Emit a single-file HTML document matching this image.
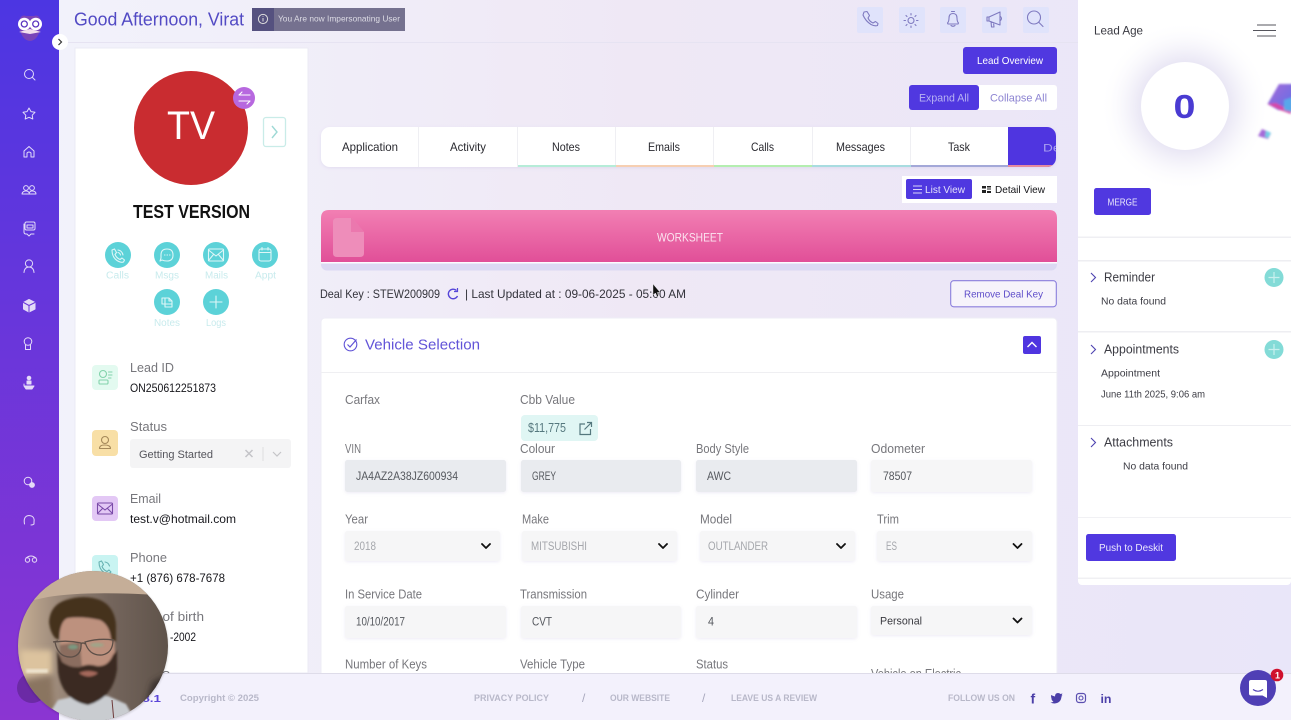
<!DOCTYPE html>
<html lang="en"><head><meta charset="utf-8"><title>Lead</title>
<style>
html,body{margin:0;padding:0;width:1291px;height:720px;overflow:hidden;background:#efeaf8}
svg{display:block;filter:blur(.35px)}
text{font-family:"Liberation Sans",sans-serif}
.lab{font-size:12.5px;fill:#77777c}
.val{font-size:12px;fill:#17171c}
.inp{font-size:11.5px;fill:#55585e}
.sel{font-size:11.5px;fill:#a5a7ac}
.tab{font-size:12px;fill:#2a2a30}
.foot{font-size:9.5px;fill:#b8b8c9;font-weight:bold}
.rt{font-size:12.5px;fill:#3c3c44}
.rs{font-size:10.5px;fill:#3c3c44}
.ac{font-size:10px;fill:#c8ebed}
.si{fill:none;stroke:#fff;stroke-width:1;stroke-linecap:round;stroke-linejoin:round;opacity:.82}
.hi{fill:none;stroke:#7f7ac0;stroke-width:1.1;stroke-linecap:round;stroke-linejoin:round}
.ai{fill:none;stroke:#fff;stroke-width:1.1;stroke-linecap:round;stroke-linejoin:round;opacity:.8}
.in{fill:none;stroke-width:1.1;stroke-linecap:round;stroke-linejoin:round}
.chev{fill:none;stroke:#111;stroke-width:1.8;stroke-linecap:round;stroke-linejoin:round}
</style></head><body>
<svg width="1291" height="720" viewBox="0 0 1291 720" xmlns="http://www.w3.org/2000/svg">
<defs>
<linearGradient id="side" x1="0" y1="0" x2="0" y2="1"><stop offset="0" stop-color="#4c36e2"/><stop offset="1" stop-color="#8b35d2"/></linearGradient>
<linearGradient id="bg" x1="0" y1="0" x2="1" y2="0"><stop offset="0" stop-color="#f2f3fc"/><stop offset=".5" stop-color="#efe8f5"/><stop offset="1" stop-color="#e9e6f9"/></linearGradient>
<linearGradient id="ws" x1="0" y1="0" x2="0" y2="1"><stop offset="0" stop-color="#f27fb3"/><stop offset="1" stop-color="#e14f98"/></linearGradient>
<linearGradient id="cube" x1="0" y1="0" x2="1" y2="1"><stop offset="0" stop-color="#a86ad8"/><stop offset="1" stop-color="#5b6fe8"/></linearGradient>
<linearGradient id="wall" x1="0" y1="0" x2="1" y2="0"><stop offset="0" stop-color="#c9b195"/><stop offset=".25" stop-color="#a08d7d"/><stop offset=".6" stop-color="#75665d"/><stop offset="1" stop-color="#5e5249"/></linearGradient>
<radialGradient id="halo"><stop offset=".5" stop-color="#8d7fc8" stop-opacity=".2"/><stop offset=".75" stop-color="#a99fd8" stop-opacity=".07"/><stop offset="1" stop-color="#fff" stop-opacity="0"/></radialGradient>
<filter id="b1" x="-20%" y="-20%" width="140%" height="140%"><feGaussianBlur stdDeviation="1"/></filter>
<filter id="b2" x="-30%" y="-30%" width="160%" height="160%"><feGaussianBlur stdDeviation="3"/></filter>
<filter id="soft" x="-5%" y="-20%" width="110%" height="140%"><feDropShadow dx="0" dy="1" stdDeviation="1.500" flood-color="#8a80c0" flood-opacity=".15"/></filter>
<clipPath id="face"><circle cx="93" cy="646" r="75"/></clipPath>
<clipPath id="tabs"><rect x="321" y="127" width="735" height="40" rx="9"/></clipPath>
<clipPath id="leftc"><rect x="75" y="48" width="233" height="625"/></clipPath>
<clipPath id="rc"><rect x="1078" y="0" width="213" height="586"/></clipPath>
</defs>

<!-- page background -->
<rect width="1291" height="720" fill="url(#bg)"/>
<rect x="59" y="42" width="1019" height="1" fill="#e6e3f2"/>

<!-- sidebar -->
<rect width="59" height="720" fill="url(#side)"/>
<g>
<path d="M19 21 Q21 14 26 16 L34 16 Q39 14 41 21 L41 28 Q37 41 30 41 Q23 41 19 28Z" fill="#8d4aa8" opacity=".7"/>
<circle cx="24.300" cy="24" r="6.300" fill="#fff"/><circle cx="35.700" cy="24" r="6.300" fill="#fff"/>
<circle cx="24.300" cy="24" r="3" fill="none" stroke="#5b36c0" stroke-width="1.300"/><circle cx="35.700" cy="24" r="3" fill="none" stroke="#5b36c0" stroke-width="1.300"/>
<path d="M19 32 L30 29 L41 32 L30 34Z" fill="#f4dfee"/>
</g>
<g class="si">
<circle cx="29" cy="74" r="4.500"/><path d="M32.500 77.500 L35 80"/>
<path d="M29 108 L31 111.600 L35 112.300 L32.200 115.200 L32.800 119 L29 117.300 L25.200 119 L25.800 115.200 L23 112.300 L27 111.600Z"/>
<path d="M24 151 L29 146.500 L34 151 L34 157 L31 157 L31 153 Q29 151 27 153 L27 157 L24 157Z"/>
<circle cx="26" cy="188" r="2.400"/><circle cx="32" cy="188" r="2.400"/><path d="M22 194 Q22.500 191 26 191 Q29 191 29.500 194Z M29 194 Q29.500 191 32 191 Q36 191 36 194Z"/>
<rect x="25" y="222" width="10" height="8" rx="1.500"/><path d="M24 224 L24 232 Q24 234 26 234 L27 234 L29 236 L31 234 L34 234"/><rect x="27" y="225" width="6" height="3"/>
<circle cx="29" cy="263.500" r="3.600"/><path d="M24 272.500 Q24.500 267 29 267 Q33.500 267 34 272.500"/>
<path d="M29 299.500 L35 302.500 L35 309 L29 312 L23.500 309 L23.500 302.500Z" fill="#fff"/><path d="M23.500 302.500 L29 305.500 L35 302.500 M29 305.500 L29 312" stroke="#6b35d8"/>
<circle cx="28" cy="341.500" r="3.800"/><path d="M25.500 345 L25.500 349.500 L30.500 349.500 L30.500 345"/>
<circle cx="29" cy="378" r="1.800" fill="#fff"/><path d="M27 384 L31 384 L31 381 L27 381Z" fill="#fff"/><path d="M24 386 L34 386 L32 389 L26 389Z M24 386 L24 384" fill="#fff"/>
<circle cx="28" cy="481" r="3.800"/><circle cx="32" cy="485" r="2.400" fill="#fff"/>
<path d="M24.500 524 Q23 516 29 515.500 Q35 516 34 522 M34 522 L34 524 Q33 525 31 525"/>
<circle cx="27.500" cy="560" r="2.200"/><circle cx="34.500" cy="560" r="2.200"/><path d="M26 558 Q31 554 36 558"/>
</g>
<circle cx="60" cy="42" r="8" fill="#fff"/>
<path d="M58.500 39 L61.500 42 L58.500 45" fill="none" stroke="#333" stroke-width="1.200"/>
<circle cx="32" cy="688" r="15" fill="#6b2aa5"/>

<!-- header -->
<text x="74" y="25.500" font-size="18.500" fill="#524ac4" textLength="170" lengthAdjust="spacingAndGlyphs">Good Afternoon, Virat</text>
<rect x="252" y="8" width="153" height="23" fill="#75718f"/>
<rect x="252" y="8" width="22" height="23" fill="#55517f"/>
<circle cx="263" cy="19" r="4.600" fill="none" stroke="#ddd" stroke-width="1"/><path d="M263 18 L263 21.500 M263 16.300 L263 16.900" stroke="#ddd" stroke-width="1"/>
<text x="278" y="21.600" font-size="8.500" fill="#dcdbe4" textLength="122" lengthAdjust="spacingAndGlyphs">You Are now Impersonating User</text>
<g fill="#e0e3fb">
<rect x="857" y="7" width="26" height="26" rx="2"/><rect x="899" y="7" width="26" height="26" rx="2"/><rect x="940" y="7" width="26" height="26" rx="2"/><rect x="982" y="7" width="25" height="26" rx="2"/><rect x="1023" y="7" width="26" height="26" rx="2"/>
</g>
<g class="hi">
<path d="M864 12 L867 11.500 L869.500 15.500 L868 18 Q869.500 21.500 873 23 L875.500 21.500 L878 23.500 L877.500 25.500 Q875 26.500 871 24.500 Q865.500 21 863 15 Z"/>
<circle cx="911" cy="20.500" r="3"/><path d="M911 13.500 V15 M911 26 V27.500 M904 20.500 H905.500 M916.500 20.500 H918 M906 15.500 L907 16.500 M915 24.500 L916 25.500 M906 25.500 L907 24.500 M915 16.500 L916 15.500"/>
<path d="M948 24 L947.500 23 Q949 21.500 949 18 Q949 13.500 953 13.500 Q957 13.500 957 18 Q957 21.500 958.500 23 L958 24 Z M951.500 11.500 L954.500 11.500 M951 25.500 Q953 27 955 25.500"/>
<path d="M989 17 L1000 12 L1000 25 L989 21 Z M989 17 L987 17 Q987 19 987 21 L989 21 M991 21.500 L991.500 27 L994 27 L993.500 22.500 M1000 16 Q1003 18.500 1000 21"/>
<circle cx="1034" cy="17.500" r="6.500"/><path d="M1039 22.500 L1043 26.500"/>
</g>

<!-- left card -->
<rect x="75" y="48" width="233" height="625" fill="#fff" stroke="#ebebf4" stroke-width="1"/>
<circle cx="191" cy="128" r="57" fill="#c92c30"/>
<text x="167" y="139" font-size="40" fill="#fff" textLength="48" lengthAdjust="spacingAndGlyphs">TV</text>
<circle cx="244" cy="98" r="11" fill="#b768df"/>
<path d="M250 95 H239 L242 92 M239 101 H250 L247 104" fill="none" stroke="#fff" stroke-width="1.100" stroke-linecap="round" stroke-linejoin="round"/>
<rect x="263.500" y="117.500" width="22" height="29" rx="2.500" fill="#fff" stroke="#c9ece8" stroke-width="1.300"/>
<path d="M272 126 L277 132 L272 138" fill="none" stroke="#9ed9d5" stroke-width="1.400"/>
<text x="133" y="218" font-size="18" font-weight="bold" fill="#111" textLength="117" lengthAdjust="spacingAndGlyphs">TEST VERSION</text>
<g fill="#5cd2d8">
<circle cx="118" cy="255" r="13"/><circle cx="167" cy="255" r="13"/><circle cx="216" cy="255" r="13"/><circle cx="265" cy="255" r="13"/><circle cx="167" cy="302" r="13"/><circle cx="216" cy="302" r="13"/>
</g>
<g class="ai">
<path d="M112 250 L114.500 249 L116.500 252.500 L115 254.500 Q116.500 258 120 259.500 L122 258 L124.500 260 L123.500 262 Q121 263 117 260.500 Q112 257 112 250 Z M118 250 Q122 250.500 123 255 M118 252.500 Q120 253 120.500 255"/>
<path d="M161 255 Q161 249 167 249 Q173 249 173 255 Q173 261 167 261 Q164 261 162 260 L160 261 L161 258 Q161 256.500 161 255Z"/><path d="M164.500 255 H165 M167 255 H167.500 M169.500 255 H170"/>
<rect x="208.500" y="249" width="15" height="12" rx="1"/><path d="M208.500 250 L216 256 L223.500 250 M208.500 260.500 L213.500 254.500 M223.500 260.500 L218.500 254.500"/>
<rect x="259" y="249" width="12" height="12" rx="2"/><path d="M259 252.500 H271 M262 247.500 V250 M268 247.500 V250"/>
<path d="M162 298 H169 L172 301 V307 H165 V304 H162 Z M165 298 V304 H172 M169 298 V301 H172"/><path d="M216 296 V308 M210 302 H222"/>
</g>
<text x="106" y="278.500" class="ac" textLength="23" lengthAdjust="spacingAndGlyphs">Calls</text>
<text x="155" y="278.500" class="ac" textLength="24" lengthAdjust="spacingAndGlyphs">Msgs</text>
<text x="205" y="278.500" class="ac" textLength="23" lengthAdjust="spacingAndGlyphs">Mails</text>
<text x="255" y="278.500" class="ac" textLength="21" lengthAdjust="spacingAndGlyphs">Appt</text>
<text x="154" y="326" class="ac" textLength="26" lengthAdjust="spacingAndGlyphs">Notes</text>
<text x="206" y="326" class="ac" textLength="20" lengthAdjust="spacingAndGlyphs">Logs</text>

<g clip-path="url(#leftc)">
<rect x="92" y="365" width="26" height="25" rx="4" fill="#e3faf0"/>
<g class="in" stroke="#83d3ab"><circle cx="103" cy="374" r="3.500"/><rect x="99" y="380" width="9" height="4" rx="1"/><path d="M108.500 372 H112 M108.500 375 H112 M108.500 378 H111"/></g>
<text x="130" y="372" class="lab" textLength="44" lengthAdjust="spacingAndGlyphs">Lead ID</text>
<text x="130" y="392" class="val" textLength="86" lengthAdjust="spacingAndGlyphs">ON250612251873</text>

<rect x="92" y="430" width="26" height="26" rx="4" fill="#f8dfa6"/>
<g class="in" stroke="#a5895a"><circle cx="105" cy="440" r="3.500"/><path d="M99.500 448.500 Q99.500 445 104.500 445 Q110.500 445 110.500 448.500 Z"/></g>
<text x="130" y="431" class="lab" textLength="37" lengthAdjust="spacingAndGlyphs">Status</text>
<rect x="130" y="439" width="161" height="29" rx="3" fill="#f4f4f5"/>
<text x="139" y="458" font-size="11" fill="#55555c" textLength="74" lengthAdjust="spacingAndGlyphs">Getting Started</text>
<path d="M245.500 450 L252.500 457 M252.500 450 L245.500 457" stroke="#c4c4c8" stroke-width="1.500"/>
<path d="M263 447 V461" stroke="#dedee0" stroke-width="1"/>
<path d="M273 452 L277 456 L281 452" fill="none" stroke="#c4c4c8" stroke-width="1.200"/>

<rect x="92" y="496" width="26" height="25" rx="4" fill="#e3c8f5"/>
<g class="in" stroke="#7a4aa8" stroke-width="1.300"><rect x="97.500" y="503" width="15" height="11" rx="1"/><path d="M97.500 504 L105 510 L112.500 504 M97.500 513.500 L102.500 508.500 M112.500 513.500 L107.500 508.500"/></g>
<text x="130" y="503" class="lab" textLength="31" lengthAdjust="spacingAndGlyphs">Email</text>
<text x="130" y="523" class="val" textLength="106" lengthAdjust="spacingAndGlyphs">test.v@hotmail.com</text>

<rect x="92" y="555" width="26" height="26" rx="4" fill="#c9f4f2"/>
<path d="M99 562 L101.500 561 L103.500 564.500 L102 566.500 Q103.500 570 107 571.500 L109 570 L111 572 Q108 575 104 572.500 Q99 569 99 562Z M105 562 Q108.500 562.500 109.500 566" class="in" stroke="#68b3b3"/>
<text x="130" y="562" class="lab" textLength="37" lengthAdjust="spacingAndGlyphs">Phone</text>
<text x="130" y="582" class="val" textLength="95" lengthAdjust="spacingAndGlyphs">+1 (876) 678-7678</text>

<text x="130" y="621" class="lab" textLength="74" lengthAdjust="spacingAndGlyphs">Date of birth</text>
<text x="170" y="641" class="val" textLength="26" lengthAdjust="spacingAndGlyphs">-2002</text>
<text x="130" y="680" class="lab" textLength="72" lengthAdjust="spacingAndGlyphs">Lead Source</text>
</g>

<!-- top right main buttons -->
<rect x="963" y="47" width="94" height="27" rx="3" fill="#5038e0"/>
<text x="977" y="64" font-size="10.500" fill="#fff" textLength="66" lengthAdjust="spacingAndGlyphs">Lead Overview</text>
<rect x="909" y="85" width="148" height="25" rx="3" fill="#fff"/>
<rect x="909" y="85" width="70" height="25" rx="3" fill="#5038e0"/>
<text x="919" y="101.500" font-size="11" fill="#b9b3f3" textLength="50" lengthAdjust="spacingAndGlyphs">Expand All</text>
<text x="990" y="101.500" font-size="11" fill="#8d84d2" textLength="57" lengthAdjust="spacingAndGlyphs">Collapse All</text>

<!-- tabs -->
<rect x="321" y="127" width="735" height="40" rx="9" fill="#fff" filter="url(#soft)"/>
<g clip-path="url(#tabs)">
<g fill="#efeff3"><rect x="418" y="127" width="1" height="40"/><rect x="517" y="127" width="1" height="40"/><rect x="615" y="127" width="1" height="40"/><rect x="713" y="127" width="1" height="40"/><rect x="812" y="127" width="1" height="40"/><rect x="910" y="127" width="1" height="40"/></g>
<rect x="518" y="165" width="98" height="2" fill="#b6ecd8"/><rect x="616" y="165" width="98" height="2" fill="#f6cfb2"/><rect x="714" y="165" width="98" height="2" fill="#b4eeb0"/><rect x="812" y="165" width="99" height="2" fill="#a8dce0"/><rect x="911" y="165" width="98" height="2" fill="#a3a8d8"/>
<rect x="1008" y="127" width="48" height="40" fill="#4f35e0"/><rect x="1008" y="165" width="48" height="2" fill="#e58a9e"/>
<text x="1043" y="151.500" font-size="11" fill="#a9a0f0" textLength="28" lengthAdjust="spacingAndGlyphs">Deal</text>
</g>
<text x="342" y="151" class="tab" textLength="56" lengthAdjust="spacingAndGlyphs">Application</text>
<text x="450" y="151" class="tab" textLength="36" lengthAdjust="spacingAndGlyphs">Activity</text>
<text x="552" y="151" class="tab" textLength="28" lengthAdjust="spacingAndGlyphs">Notes</text>
<text x="648" y="151" class="tab" textLength="32" lengthAdjust="spacingAndGlyphs">Emails</text>
<text x="751" y="151" class="tab" textLength="23" lengthAdjust="spacingAndGlyphs">Calls</text>
<text x="836" y="151" class="tab" textLength="49" lengthAdjust="spacingAndGlyphs">Messages</text>
<text x="948" y="151" class="tab" textLength="22" lengthAdjust="spacingAndGlyphs">Task</text>

<!-- view toggle -->
<rect x="902" y="176" width="155" height="27" fill="#fff"/>
<rect x="906" y="179" width="66" height="20" rx="2" fill="#4f38e0"/>
<path d="M913 186 H922 M913 189.500 H922 M913 193 H922" stroke="#d8d4fa" stroke-width="1"/>
<text x="925" y="193" font-size="10.500" fill="#e4e1fb" textLength="40" lengthAdjust="spacingAndGlyphs">List View</text>
<g fill="#222"><rect x="982" y="186" width="4" height="2.500"/><rect x="982" y="190" width="4" height="3"/><rect x="987" y="186" width="4" height="1.500"/><rect x="987" y="188.500" width="4" height="1"/><rect x="987" y="191" width="4" height="2"/></g>
<text x="995" y="193" font-size="10.500" fill="#141418" textLength="50" lengthAdjust="spacingAndGlyphs">Detail View</text>

<!-- worksheet -->
<rect x="321" y="255" width="736" height="15.500" rx="6" fill="#dcd9f3"/>
<rect x="321" y="258" width="736" height="5.500" fill="#fdfbfe"/>
<path d="M321 262 V218 Q321 210 329 210 H1049 Q1057 210 1057 218 V262Z" fill="url(#ws)"/>
<path d="M337 218 H352 L364 232 V253 Q364 257 360 257 H337 Q333 257 333 253 V222 Q333 218 337 218Z" fill="#ee8dba"/>
<path d="M351 218 H352 L364 232 H351Z" fill="#eb78ae"/>
<text x="657" y="241.500" font-size="12" fill="#fbe4f0" textLength="66" lengthAdjust="spacingAndGlyphs">WORKSHEET</text>

<!-- deal key -->
<text x="320" y="298" font-size="12" fill="#33333b" textLength="120" lengthAdjust="spacingAndGlyphs">Deal Key : STEW200909</text>
<path d="M456.500 290.500 A4.800 4.800 0 1 0 457.500 296" fill="none" stroke="#5545d8" stroke-width="1.400"/><path d="M457.500 288 V291.500 H454" fill="none" stroke="#5545d8" stroke-width="1.200"/>
<text x="465" y="298" font-size="12" fill="#33333b" textLength="221" lengthAdjust="spacingAndGlyphs">| Last Updated at : 09-06-2025 - 05:00 AM</text>
<path d="M653 284 V295 L655.500 293 L657 296.500 L658.500 295.800 L657 292.500 L660 292.300Z" fill="#111" stroke="#eee" stroke-width=".4"/>
<rect x="950.700" y="280.700" width="105.600" height="26.100" rx="3" fill="#f6f3fb" stroke="#8a7edc" stroke-width="1.100"/>
<text x="964" y="297.500" font-size="10.500" fill="#5d4cc9" textLength="79" lengthAdjust="spacingAndGlyphs">Remove Deal Key</text>

<!-- vehicle card -->
<rect x="321" y="318" width="736" height="370" rx="4" fill="#fff" stroke="#eeedf6" stroke-width="1"/>
<rect x="321" y="372" width="736" height="1" fill="#efeff2"/>
<circle cx="350.500" cy="344.500" r="6.300" fill="none" stroke="#6053d6" stroke-width="1.100"/>
<path d="M347.500 344.500 L350 347 L356.500 339.500" fill="none" stroke="#6053d6" stroke-width="1.200"/>
<text x="365" y="349.500" font-size="15" fill="#6254d8" textLength="115" lengthAdjust="spacingAndGlyphs">Vehicle Selection</text>
<rect x="1023" y="336" width="18" height="18" rx="2" fill="#4f35e0"/>
<path d="M1027.500 347 L1032 342.500 L1036.500 347" fill="none" stroke="#fff" stroke-width="1.400"/>

<text x="345" y="404" class="lab" textLength="35" lengthAdjust="spacingAndGlyphs">Carfax</text>
<text x="520" y="404" class="lab" textLength="55" lengthAdjust="spacingAndGlyphs">Cbb Value</text>
<rect x="521" y="415" width="77" height="26" rx="4" fill="#e0f6f4"/>
<text x="528" y="432" font-size="13" fill="#55787e" textLength="38" lengthAdjust="spacingAndGlyphs">$11,775</text>
<path d="M585 424 H580 V434.500 H590.500 V429 M584.500 429.500 L591 423 M587 422.500 H591.500 V427" fill="none" stroke="#55787e" stroke-width="1.200"/>

<g>
<text x="345" y="453" class="lab" textLength="16" lengthAdjust="spacingAndGlyphs">VIN</text>
<text x="520" y="453" class="lab" textLength="35" lengthAdjust="spacingAndGlyphs">Colour</text>
<text x="696" y="453" class="lab" textLength="53" lengthAdjust="spacingAndGlyphs">Body Style</text>
<text x="871" y="453" class="lab" textLength="54" lengthAdjust="spacingAndGlyphs">Odometer</text>
<text x="345" y="523.500" class="lab" textLength="23" lengthAdjust="spacingAndGlyphs">Year</text>
<text x="522" y="523.500" class="lab" textLength="27" lengthAdjust="spacingAndGlyphs">Make</text>
<text x="700" y="523.500" class="lab" textLength="32" lengthAdjust="spacingAndGlyphs">Model</text>
<text x="877" y="523.500" class="lab" textLength="22" lengthAdjust="spacingAndGlyphs">Trim</text>
<text x="345" y="598.500" class="lab" textLength="77" lengthAdjust="spacingAndGlyphs">In Service Date</text>
<text x="520" y="598.500" class="lab" textLength="67" lengthAdjust="spacingAndGlyphs">Transmission</text>
<text x="696" y="598.500" class="lab" textLength="43" lengthAdjust="spacingAndGlyphs">Cylinder</text>
<text x="871" y="598.500" class="lab" textLength="33" lengthAdjust="spacingAndGlyphs">Usage</text>
<text x="345" y="668.500" class="lab" textLength="82" lengthAdjust="spacingAndGlyphs">Number of Keys</text>
<text x="520" y="668.500" class="lab" textLength="65" lengthAdjust="spacingAndGlyphs">Vehicle Type</text>
<text x="696" y="668.500" class="lab" textLength="32" lengthAdjust="spacingAndGlyphs">Status</text>
<text x="871" y="678" class="lab" textLength="90" lengthAdjust="spacingAndGlyphs">Vehicle on Electric</text>
</g>

<g filter="url(#soft)">
<rect x="345" y="460" width="161" height="32" rx="2.500" fill="#e9ebef"/>
<rect x="521" y="460" width="160" height="32" rx="2.500" fill="#e9ebef"/>
<rect x="696" y="460" width="161" height="32" rx="2.500" fill="#e9ebef"/>
<rect x="871" y="460" width="161" height="32" rx="2.500" fill="#f6f6f7"/>
<rect x="345" y="531" width="155" height="30" rx="2.500" fill="#f6f6f7"/>
<rect x="522" y="531" width="155" height="30" rx="2.500" fill="#f6f6f7"/>
<rect x="700" y="531" width="155" height="30" rx="2.500" fill="#f6f6f7"/>
<rect x="877" y="531" width="155" height="30" rx="2.500" fill="#f6f6f7"/>
<rect x="345" y="606" width="161" height="32" rx="2.500" fill="#f6f6f7"/>
<rect x="521" y="606" width="160" height="32" rx="2.500" fill="#f6f6f7"/>
<rect x="696" y="606" width="161" height="32" rx="2.500" fill="#f6f6f7"/>
<rect x="871" y="606" width="161" height="29" rx="2.500" fill="#f6f6f7"/>
</g>
<text x="356" y="480" class="inp" textLength="102" lengthAdjust="spacingAndGlyphs">JA4AZ2A38JZ600934</text>
<text x="532" y="480" class="inp" textLength="24" lengthAdjust="spacingAndGlyphs">GREY</text>
<text x="707" y="480" class="inp" textLength="24" lengthAdjust="spacingAndGlyphs">AWC</text>
<text x="883" y="480" class="inp" textLength="29" lengthAdjust="spacingAndGlyphs">78507</text>
<text x="354" y="550" class="sel" textLength="22" lengthAdjust="spacingAndGlyphs">2018</text>
<text x="531" y="550" class="sel" textLength="56" lengthAdjust="spacingAndGlyphs">MITSUBISHI</text>
<text x="708" y="550" class="sel" textLength="60" lengthAdjust="spacingAndGlyphs">OUTLANDER</text>
<text x="886" y="550" class="sel" textLength="11" lengthAdjust="spacingAndGlyphs">ES</text>
<path class="chev" d="M482 544 L486 548 L490 544 M659 544 L663 548 L667 544 M837 544 L841 548 L845 544 M1013.500 544 L1017.500 548 L1021.500 544 M1013.500 618.500 L1017.500 622.500 L1021.500 618.500"/>
<text x="356" y="625.500" class="inp" textLength="49" lengthAdjust="spacingAndGlyphs">10/10/2017</text>
<text x="532" y="625.500" class="inp" textLength="20" lengthAdjust="spacingAndGlyphs">CVT</text>
<text x="708" y="625.500" class="inp" textLength="6" lengthAdjust="spacingAndGlyphs">4</text>
<text x="880" y="624.500" font-size="11" fill="#3a3a40" textLength="42" lengthAdjust="spacingAndGlyphs">Personal</text>

<!-- right panel -->
<g clip-path="url(#rc)">
<rect x="1078" y="-6" width="213" height="591" rx="4" fill="#fff"/>
<circle cx="1185" cy="106" r="85" fill="url(#halo)"/>
<circle cx="1185" cy="106" r="44" fill="#fff"/>
<text x="1173.500" y="118" font-size="33" font-weight="bold" fill="#4a3bd2" textLength="22" lengthAdjust="spacingAndGlyphs">0</text>
<g filter="url(#b1)">
<path d="M1279 84 L1293 84 L1293 112 L1278 110 L1267.500 104Z" fill="url(#cube)"/>
<path d="M1267.500 104 L1280 110 L1291 114 L1291 111 L1276 103 Z" fill="#d646a8"/>
<path d="M1284 100 L1293 97 L1293 112 L1284 110Z" fill="#59a7ea"/>
<path d="M1262 129 L1271 133 L1268 139 L1258 136Z" fill="#a56ad8"/>
<path d="M1266 130.500 L1271 133 L1268 138 L1265 137Z" fill="#72cfe6"/>
</g>
<text x="1094" y="34.500" font-size="12" fill="#3a3a42" textLength="49" lengthAdjust="spacingAndGlyphs">Lead Age</text>
<path d="M1257 25 H1276 M1253 30.500 H1276 M1257 36 H1276" stroke="#55555c" stroke-width="1.100"/>
<rect x="1094" y="188" width="57" height="27" rx="2.500" fill="#5038e0"/>
<text x="1107.500" y="205.500" font-size="10" fill="#e8e6fb" textLength="30" lengthAdjust="spacingAndGlyphs">MERGE</text>
<rect x="1078" y="236.500" width="213" height="1.500" fill="#efeff3"/>
<rect x="1078" y="260" width="213" height="1.500" fill="#eeeef2"/>
<path d="M1091 273 L1095.500 277.500 L1091 282 M1091 345 L1095.500 349.500 L1091 354 M1091 438 L1095.500 442.500 L1091 447" fill="none" stroke="#4e43b0" stroke-width="1.100"/>
<text x="1104" y="281.500" class="rt" textLength="51" lengthAdjust="spacingAndGlyphs">Reminder</text>
<circle cx="1274" cy="277.500" r="9.500" fill="#83dbd7"/><path d="M1274 272 V283 M1268.500 277.500 H1279.500" stroke="#c8f0ee" stroke-width="1.200"/>
<text x="1101" y="304.500" class="rs" textLength="65" lengthAdjust="spacingAndGlyphs">No data found</text>
<rect x="1078" y="331" width="213" height="1.500" fill="#eeeef2"/>
<text x="1104" y="353.500" class="rt" textLength="75" lengthAdjust="spacingAndGlyphs">Appointments</text>
<circle cx="1274" cy="349.500" r="9.500" fill="#83dbd7"/><path d="M1274 344 V355 M1268.500 349.500 H1279.500" stroke="#c8f0ee" stroke-width="1.200"/>
<text x="1101" y="376.500" class="rs" textLength="59" lengthAdjust="spacingAndGlyphs">Appointment</text>
<text x="1101" y="397.500" class="rs" textLength="104" lengthAdjust="spacingAndGlyphs">June 11th 2025, 9:06 am</text>
<rect x="1078" y="425" width="213" height="1" fill="#eeeef2"/>
<text x="1104" y="446.500" class="rt" textLength="69" lengthAdjust="spacingAndGlyphs">Attachments</text>
<text x="1123" y="469.500" class="rs" textLength="65" lengthAdjust="spacingAndGlyphs">No data found</text>
<rect x="1078" y="517" width="213" height="1" fill="#f1f1f4"/>
<rect x="1086" y="534" width="90" height="27" rx="2.500" fill="#5038e0"/>
<text x="1099" y="551" font-size="10.500" fill="#ece9fd" textLength="64" lengthAdjust="spacingAndGlyphs">Push to Deskit</text>
<rect x="1078" y="577.500" width="213" height="1.500" fill="#f0f0f3"/>
</g>

<!-- footer -->
<rect x="59" y="673" width="1232" height="47" fill="#f3f1fc"/>
<rect x="59" y="673" width="1232" height="1" fill="#dedce9"/>
<text x="120" y="702" font-size="10.500" font-weight="bold" fill="#5a45d8" textLength="41" lengthAdjust="spacingAndGlyphs">v 4.8.1</text>
<text x="180" y="701" class="foot" textLength="79" lengthAdjust="spacingAndGlyphs">Copyright © 2025</text>
<text x="474" y="701" class="foot" textLength="75" lengthAdjust="spacingAndGlyphs">PRIVACY POLICY</text>
<text x="582" y="702" font-size="12" fill="#a8a8bd">/</text>
<text x="610" y="701" class="foot" textLength="60" lengthAdjust="spacingAndGlyphs">OUR WEBSITE</text>
<text x="702" y="702" font-size="12" fill="#a8a8bd">/</text>
<text x="731" y="701" class="foot" textLength="86" lengthAdjust="spacingAndGlyphs">LEAVE US A REVIEW</text>
<text x="948" y="701" class="foot" textLength="67" lengthAdjust="spacingAndGlyphs">FOLLOW US ON</text>
<text x="1030.500" y="703.500" font-size="14" font-weight="bold" fill="#4b3fa8">f</text>
<path d="M1051 695 Q1053 696 1055 696.500 Q1055 693 1058 693 Q1059.500 693 1060.500 694 L1062.500 693.500 L1061.500 695.500 L1062.500 695.500 L1061.500 696.500 Q1061 703 1054.500 703.500 Q1052.500 703.500 1050.500 702.500 Q1052.500 702.500 1053.500 701.500 Q1051.500 700.500 1051.500 698.500 Q1051 697 1051 695Z" fill="#4b3fa8"/>
<rect x="1076.500" y="693.500" width="9" height="9" rx="2.500" fill="none" stroke="#5a4fb0" stroke-width="1.200"/><circle cx="1081" cy="698" r="2" fill="none" stroke="#5a4fb0" stroke-width="1.100"/>
<text x="1100.500" y="703" font-size="12" font-weight="bold" fill="#4b3fa8" textLength="11" lengthAdjust="spacingAndGlyphs">in</text>
<circle cx="1258" cy="688" r="18" fill="#4f3fb5"/>
<path d="M1251 680 H1265 Q1267 680 1267 682 V698 L1262.500 695.500 H1251 Q1249 695.500 1249 693.500 V682 Q1249 680 1251 680Z" fill="#fff"/>
<path d="M1253 689.500 Q1258 693 1263 689.500" fill="none" stroke="#4f3fb5" stroke-width="1.100"/>
<circle cx="1277" cy="675" r="6.300" fill="#d0112d"/>
<text x="1275" y="678.500" font-size="9" font-weight="bold" fill="#fff">1</text>

<!-- webcam -->
<circle cx="93" cy="647" r="75.500" fill="#000" opacity=".14" filter="url(#b1)"/>
<g clip-path="url(#face)">
<rect x="15" y="568" width="156" height="156" fill="url(#wall)"/>
<path d="M15 568 H171 V596 Q90 590 48 597 L15 604Z" fill="#c5ae98"/>
<rect x="20" y="650" width="32" height="24" fill="#dcc39e" filter="url(#b2)"/>
<rect x="26" y="669" width="22" height="4" fill="#eee4cf" filter="url(#b1)"/>
<path d="M15 682 L52 676 L55 722 L15 722Z" fill="#8a7560" filter="url(#b2)"/>
<path d="M152 682 L171 672 V722 H140Z" fill="#3a332e" filter="url(#b2)"/>
<g filter="url(#b1)">
<path d="M44 722 L58 700 L76 696 L108 696 L126 704 L136 722Z" fill="#c9ccd0"/>
<path d="M60 630 Q62 612 88 612 Q112 612 114 632 L116 670 Q110 695 88 700 Q64 695 60 670Z" fill="#bd917e"/>
<path d="M60 645 L80 642 L82 668 L60 672Z" fill="#8b6d5e"/>
<path d="M57 650 L62 662 Q70 668 80 667 Q88 663 97 666 Q108 667 113 655 L117 650 L117 670 Q113 698 88 705 Q62 700 58 672Z" fill="#3b2a22"/>
<path d="M79 673 Q88 669 98 673 Q89 680 79 673Z" fill="#a5695c"/>
<path d="M49 622 Q50 605 66 600 Q84 594 100 600 Q114 606 116 624 L116 642 L111 640 Q110 625 100 620 Q82 616 68 618 Q60 620 59 640 L55 638 Q50 632 49 622Z" fill="#44301f"/>
</g>
<g fill="none" stroke="#5d4f48" stroke-width="1.300">
<path d="M53 642 L58 641 M114 640 L112 640"/>
<path d="M55 642 Q68 640 81 643 Q82 655 72 657 Q58 658 55 642Z"/>
<path d="M85 642 Q99 638 113 640 Q113 653 102 655 Q89 656 85 642Z"/>
<path d="M81 644 Q83 642 85 644"/>
</g>
<ellipse cx="73" cy="647" rx="5" ry="2.500" fill="#76a88c" opacity=".75" filter="url(#b1)"/>
<ellipse cx="97" cy="645" rx="7" ry="2" fill="#8fb090" opacity=".65" filter="url(#b1)"/>
<path d="M112 700 L114 722" stroke="#6e3a3a" stroke-width="1"/>
</g>
</svg>
</body></html>
